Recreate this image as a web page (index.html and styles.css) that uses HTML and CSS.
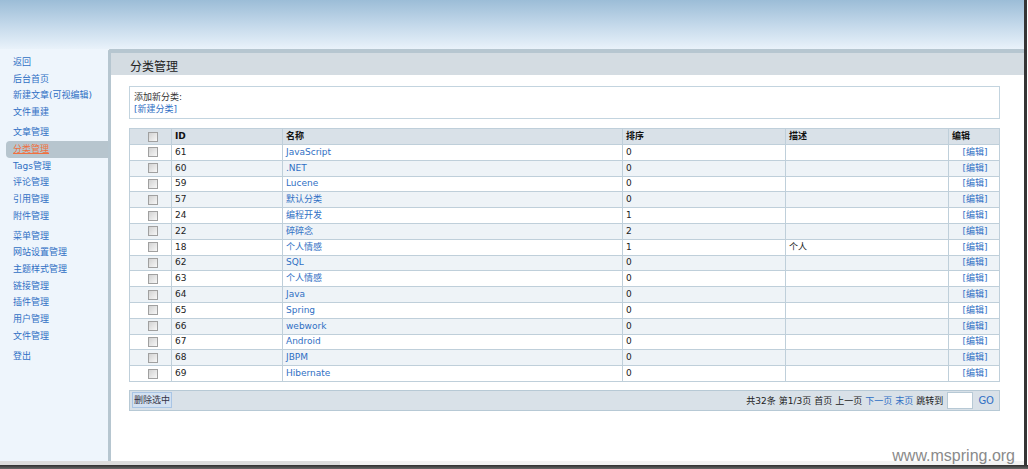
FILE: index.html
```html
<!DOCTYPE html>
<html lang="zh">
<head>
<meta charset="utf-8">
<title>分类管理</title>
<link rel="stylesheet" href="styles.css">
</head>
<body>
<div class="frame">
  <div class="window">
    <div class="header"></div>
    <div class="body">
      <nav class="sidebar">
        <ul class="group">
          <li><a href="#">返回</a></li>
          <li><a href="#">后台首页</a></li>
          <li><a href="#">新建文章(可视编辑)</a></li>
          <li><a href="#">文件重建</a></li>
        </ul>
        <ul class="group">
          <li><a href="#">文章管理</a></li>
          <li class="active"><a href="#">分类管理</a></li>
          <li><a href="#">Tags管理</a></li>
          <li><a href="#">评论管理</a></li>
          <li><a href="#">引用管理</a></li>
          <li><a href="#">附件管理</a></li>
        </ul>
        <ul class="group">
          <li><a href="#">菜单管理</a></li>
          <li><a href="#">网站设置管理</a></li>
          <li><a href="#">主题样式管理</a></li>
          <li><a href="#">链接管理</a></li>
          <li><a href="#">插件管理</a></li>
          <li><a href="#">用户管理</a></li>
          <li><a href="#">文件管理</a></li>
        </ul>
        <ul class="group">
          <li><a href="#">登出</a></li>
        </ul>
      </nav>
      <main class="panel">
        <h1 class="title">分类管理</h1>
        <div class="content">
          <div class="addbox">
            <div class="addlabel">添加新分类:</div>
            <a class="link" href="#">[新建分类]</a>
          </div>
          <table class="grid">
            <colgroup>
              <col class="c-chk"><col class="c-id"><col class="c-name"><col class="c-sort"><col class="c-desc"><col class="c-edit">
            </colgroup>
            <thead>
              <tr><th class="chk"><span class="box"></span></th><th>ID</th><th>名称</th><th>排序</th><th>描述</th><th>编辑</th></tr>
            </thead>
            <tbody>
              <tr><td class="chk"><span class="box"></span></td><td>61</td><td><a class="link" href="#">JavaScript</a></td><td>0</td><td></td><td class="edit"><a class="link" href="#">[编辑]</a></td></tr>
              <tr><td class="chk"><span class="box"></span></td><td>60</td><td><a class="link" href="#">.NET</a></td><td>0</td><td></td><td class="edit"><a class="link" href="#">[编辑]</a></td></tr>
              <tr><td class="chk"><span class="box"></span></td><td>59</td><td><a class="link" href="#">Lucene</a></td><td>0</td><td></td><td class="edit"><a class="link" href="#">[编辑]</a></td></tr>
              <tr><td class="chk"><span class="box"></span></td><td>57</td><td><a class="link" href="#">默认分类</a></td><td>0</td><td></td><td class="edit"><a class="link" href="#">[编辑]</a></td></tr>
              <tr><td class="chk"><span class="box"></span></td><td>24</td><td><a class="link" href="#">编程开发</a></td><td>1</td><td></td><td class="edit"><a class="link" href="#">[编辑]</a></td></tr>
              <tr><td class="chk"><span class="box"></span></td><td>22</td><td><a class="link" href="#">碎碎念</a></td><td>2</td><td></td><td class="edit"><a class="link" href="#">[编辑]</a></td></tr>
              <tr><td class="chk"><span class="box"></span></td><td>18</td><td><a class="link" href="#">个人情感</a></td><td>1</td><td>个人</td><td class="edit"><a class="link" href="#">[编辑]</a></td></tr>
              <tr><td class="chk"><span class="box"></span></td><td>62</td><td><a class="link" href="#">SQL</a></td><td>0</td><td></td><td class="edit"><a class="link" href="#">[编辑]</a></td></tr>
              <tr><td class="chk"><span class="box"></span></td><td>63</td><td><a class="link" href="#">个人情感</a></td><td>0</td><td></td><td class="edit"><a class="link" href="#">[编辑]</a></td></tr>
              <tr><td class="chk"><span class="box"></span></td><td>64</td><td><a class="link" href="#">Java</a></td><td>0</td><td></td><td class="edit"><a class="link" href="#">[编辑]</a></td></tr>
              <tr><td class="chk"><span class="box"></span></td><td>65</td><td><a class="link" href="#">Spring</a></td><td>0</td><td></td><td class="edit"><a class="link" href="#">[编辑]</a></td></tr>
              <tr><td class="chk"><span class="box"></span></td><td>66</td><td><a class="link" href="#">webwork</a></td><td>0</td><td></td><td class="edit"><a class="link" href="#">[编辑]</a></td></tr>
              <tr><td class="chk"><span class="box"></span></td><td>67</td><td><a class="link" href="#">Android</a></td><td>0</td><td></td><td class="edit"><a class="link" href="#">[编辑]</a></td></tr>
              <tr><td class="chk"><span class="box"></span></td><td>68</td><td><a class="link" href="#">JBPM</a></td><td>0</td><td></td><td class="edit"><a class="link" href="#">[编辑]</a></td></tr>
              <tr><td class="chk"><span class="box"></span></td><td>69</td><td><a class="link" href="#">Hibernate</a></td><td>0</td><td></td><td class="edit"><a class="link" href="#">[编辑]</a></td></tr>
            </tbody>
          </table>
          <div class="bar">
            <button class="delbtn" type="button">删除选中</button>
            <div class="pager">
              <span>共32条</span>
              <span>第1/3页</span>
              <span>首页</span>
              <span>上一页</span>
              <a class="link" href="#">下一页</a>
              <a class="link" href="#">末页</a>
              <span>跳转到</span>
              <input class="jump" type="text">
              <a class="link go" href="#">GO</a>
            </div>
          </div>
        </div>
      </main>
    </div>
    <div class="scrollbar"><div class="thumb"></div></div>
    <div class="watermark">www.mspring.org</div>
  </div>
  <div class="frame-bottom"></div>
</div>
</body>
</html>
```

FILE: styles.css
```css
* { box-sizing: border-box; }
html, body { margin: 0; padding: 0; background: #ffffff; }
body {
  font-family: "DejaVu Sans", "Noto Sans CJK SC", sans-serif;
  font-size: 9px;
  color: #222;
  width: 1028px;
  height: 469px;
  overflow: hidden;
}
ul { list-style: none; margin: 0; padding: 0; }
a { text-decoration: none; }
.link { color: #2f6fc4; }

.frame { width: 1028px; height: 469px; }
.window {
  position: relative;
  width: 1027px;
  height: 465px;
  border-right: 3px solid #353535;
  display: flex;
  flex-direction: column;
  overflow: hidden;
}
.header {
  height: 49px;
  flex: none;
  background: linear-gradient(#9cbdd7 0%, #c3d8ea 50%, #e9f2fa 100%);
}
.body {
  flex: 1;
  display: flex;
  min-height: 0;
}
.sidebar {
  width: 108px;
  flex: none;
  background: #eef5fc;
  padding-top: 5px;
}
.group { margin-bottom: 3.6px; }
.group li {
  height: 16.67px;
  line-height: 16.67px;
  padding-left: 13px;
  white-space: nowrap;
}
.group li a { color: #2f6fc4; }
.group li.active {
  margin-left: 6px;
  padding-left: 7px;
  background: #b7c5ce;
  border-radius: 4px 0 0 4px;
}
.group li.active a { color: #f0703e; text-decoration: underline; }

.panel {
  flex: 1;
  border-top: 4px solid #b6c6d0;
  border-left: 3px solid #b6c6d0;
  border-top-left-radius: 3px;
  background: #fff;
  display: flex;
  flex-direction: column;
}
.title {
  margin: 0;
  height: 22px;
  line-height: 25px;
  background: #d4dce2;
  font-size: 12px;
  font-weight: normal;
  color: #222;
  padding-left: 19px;
  font-family: "Noto Sans CJK SC", sans-serif;
}
.content {
  padding: 11px 25px 0 18px;
}
.addbox {
  height: 33px;
  border: 1px solid #c3d4df;
  padding: 4px 0 0 4px;
  line-height: 12px;
}
.addlabel { color: #333; }

.grid {
  margin-top: 9px;
  width: 870px;
  table-layout: fixed;
  border-collapse: collapse;
  border: 1px solid #b7c9d5;
}
.c-chk { width: 42px; }
.c-id { width: 111px; }
.c-name { width: 340px; }
.c-sort { width: 163px; }
.c-desc { width: 163px; }
.c-edit { width: 51px; }
.grid th, .grid td {
  border: 1px solid #bfcfda;
  height: 15.8px;
  padding: 0 0 0 3px;
  text-align: left;
  vertical-align: middle;
  white-space: nowrap;
  line-height: 13px;
}
.grid th {
  background: #d9e1e8;
  font-weight: bold;
  color: #111;
  height: 16px;
}
.grid tbody tr:nth-child(even) td { background: #eef3f7; }
.grid .chk { text-align: center; padding: 0 0 0 4px; }
.grid td.edit { text-align: center; padding: 0 0 0 2px; }
.box {
  display: inline-block;
  width: 10px;
  height: 10px;
  border: 1px solid #a0a0a0;
  background: linear-gradient(135deg, #d2d2d2, #f7f7f7);
  vertical-align: middle;
}

.bar {
  margin-top: 8px;
  height: 21px;
  background: #d9e1e8;
  border: 1px solid #b7c9d5;
  display: flex;
  align-items: center;
  justify-content: space-between;
  padding: 0 5px 0 2px;
}
.delbtn {
  font: inherit;
  height: 16px;
  padding: 0 1px;
  background: #d3e1f1;
  border: 1px solid #a9c5e5;
  color: #334;
  line-height: 14px;
}
.pager {
  display: flex;
  align-items: center;
  gap: 3px;
  color: #222;
}
.jump {
  width: 26px;
  height: 17px;
  border: 1px solid #b7c9d5;
  background: #fff;
  margin: 0 1px;
  padding: 0;
}
.go { font-size: 10px; margin-left: 1px; }

.scrollbar {
  height: 4px;
  flex: none;
  background: #f3f3f3;
}
.thumb {
  width: 340px;
  height: 4px;
  background: #dcdcdc;
}
.watermark {
  position: absolute;
  right: 9px;
  bottom: 0;
  font-family: "Liberation Sans", Arial, sans-serif;
  font-size: 16px;
  color: #8a8a8a;
}
.frame-bottom {
  height: 4px;
  width: 1028px;
  background: linear-gradient(#2e2e2e, #6a6a6a);
}
```
